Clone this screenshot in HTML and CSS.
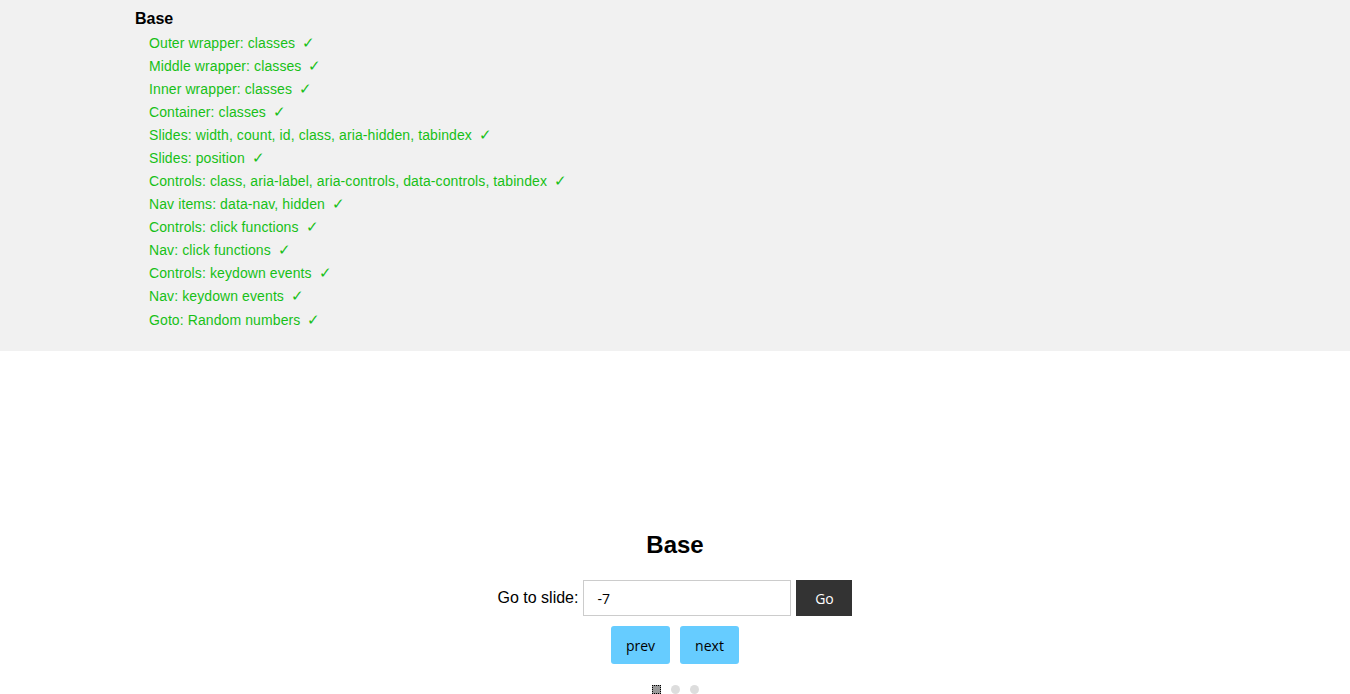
FILE: index.html
```html
<!DOCTYPE html>
<html>
<head>
<meta charset="utf-8">
<link rel="stylesheet" href="styles.css">
</head>
<body>
<div class="results">
  <div class="results-title">Base</div>
  <ul class="checks">
    <li>Outer wrapper: classes <span class="tick">✓</span></li>
    <li>Middle wrapper: classes <span class="tick">✓</span></li>
    <li>Inner wrapper: classes <span class="tick">✓</span></li>
    <li>Container: classes <span class="tick">✓</span></li>
    <li>Slides: width, count, id, class, aria-hidden, tabindex <span class="tick">✓</span></li>
    <li>Slides: position <span class="tick">✓</span></li>
    <li>Controls: class, aria-label, aria-controls, data-controls, tabindex <span class="tick">✓</span></li>
    <li>Nav items: data-nav, hidden <span class="tick">✓</span></li>
    <li>Controls: click functions <span class="tick">✓</span></li>
    <li>Nav: click functions <span class="tick">✓</span></li>
    <li>Controls: keydown events <span class="tick">✓</span></li>
    <li>Nav: keydown events <span class="tick">✓</span></li>
    <li class="last">Goto: Random numbers <span class="tick">✓</span></li>
  </ul>
</div>
<div class="slider-area"></div>
<div class="demo">
  <h2 class="demo-title">Base</h2>
  <div class="goto-row">
    <label class="goto-label">Go to slide:</label>
    <input class="goto-input" type="text" value="-7">
    <button class="goto-btn">Go</button>
  </div>
  <div class="controls">
    <button class="ctrl-btn">prev</button>
    <button class="ctrl-btn">next</button>
  </div>
  <div class="nav">
    <span class="dot dot-active"></span>
    <span class="dot"></span>
    <span class="dot"></span>
  </div>
</div>
</body>
</html>
```
FILE: styles.css
```css
html, body {
  margin: 0;
  padding: 0;
  background: #fff;
  font-family: "Liberation Sans", Arial, sans-serif;
}
.results {
  background: #f1f1f1;
  padding: 9px 0 0 135px;
  height: 342px;
}
.results-title {
  font-size: 16px;
  font-weight: bold;
  line-height: 20px;
  color: #000;
}
.checks {
  list-style: none;
  margin: 3px 0 0 0;
  padding: 0 0 0 14px;
}
.checks li {
  font-size: 14px;
  line-height: 23px;
  letter-spacing: 0.1px;
  color: #17c017;
}
.checks li.last {
  margin-top: 1px;
}
.tick {
  font-family: "DejaVu Sans", sans-serif;
  font-size: 15px;
  font-weight: 300;
  margin-left: 3px;
}
.slider-area {
  height: 180px;
}
.demo {
  text-align: center;
}
.demo-title {
  margin: 0;
  font-size: 24px;
  line-height: 28px;
  font-weight: bold;
  color: #000;
}
.goto-row {
  margin-top: 21px;
  display: flex;
  justify-content: center;
  align-items: center;
  gap: 5px;
}
.goto-label {
  font-size: 16px;
  color: #000;
}
.goto-input {
  box-sizing: border-box;
  width: 208px;
  height: 36px;
  border: 1px solid #ccc;
  padding: 0 0 0 13px;
  margin: 0;
  font-family: "Open Sans", "Noto Sans", sans-serif;
  font-size: 14px;
  color: #000;
  outline: none;
}
.goto-btn {
  box-sizing: border-box;
  width: 56px;
  height: 36px;
  border: 0;
  margin: 0;
  background: #333;
  color: #fff;
  font-family: "Open Sans", "Noto Sans", sans-serif;
  font-size: 14px;
}
.controls {
  margin-top: 10px;
  display: flex;
  justify-content: center;
  gap: 10px;
}
.ctrl-btn {
  box-sizing: border-box;
  width: 59px;
  height: 38px;
  border: 0;
  border-radius: 3px;
  background: #66ccff;
  color: #000;
  font-family: "Open Sans", "Noto Sans", sans-serif;
  font-size: 14px;
  padding: 0;
}
.nav {
  margin-top: 21px;
  display: flex;
  justify-content: center;
  gap: 10px;
}
.dot {
  width: 9px;
  height: 9px;
  border-radius: 50%;
  background: #ddd;
}
.dot-active {
  border-radius: 0;
  background: #999;
  box-sizing: border-box;
  outline: 1px dotted #000;
  outline-offset: -1px;
}
```
